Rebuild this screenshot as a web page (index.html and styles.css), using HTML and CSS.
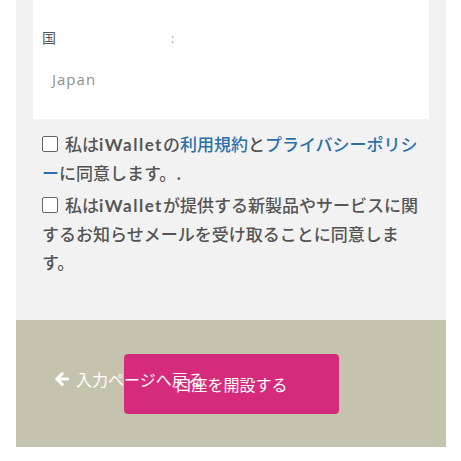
FILE: index.html
```html
<!DOCTYPE html>
<html lang="ja">
<head>
<meta charset="utf-8">
<link rel="stylesheet" href="styles.css">
</head>
<body>
<div class="panel">
  <div class="card">
    <div class="label-row"><span class="label">国</span><span class="colon">:</span></div>
    <div class="value">Japan</div>
  </div>
  <p class="agree"><span class="box"></span>私は<span class="latin">iWallet</span>の<a class="link">利用規約</a>と<a class="link">プライバシーポリシー</a>に同意します。.</p>
  <p class="agree"><span class="box"></span>私は<span class="latin">iWallet</span>が提供する新製品やサービスに関するお知らせメールを受け取ることに同意します。</p>
</div>
<div class="footer">
  <button class="submit">口座を開設する</button>
  <a class="back"><svg class="arrow" viewBox="0 0 14 14" width="14" height="14"><path d="M7.2 1.6 L1.8 7 L7.2 12.4 M2.2 7 H12.6" fill="none" stroke="#fff" stroke-width="3" stroke-linecap="round" stroke-linejoin="round"/></svg>入力ページへ戻る</a>
</div>
</body>
</html>
```
FILE: styles.css
```css
html, body {
  margin: 0;
  padding: 0;
  background: #ffffff;
}
body {
  width: 461px;
  height: 461px;
  overflow: hidden;
  font-family: "Noto Sans CJK JP", "Lato", sans-serif;
}
.panel {
  margin: 0 15px 0 16px;
  background: #f2f2f2;
  padding: 0 22px 40px 26px;
}
.card {
  background: #ffffff;
  margin: 0 -5px 11px -9px;
  padding: 26px 9px 29px 9px;
}
.label-row {
  display: flex;
  align-items: center;
  height: 22px;
  font-size: 14px;
  color: #555;
}
.label {
  width: 129px;
}
.colon {
  color: #aaa;
  font-size: 12px;
}
.value {
  padding: 20px 10px 0 10px;
  font-family: "Open Sans", sans-serif;
  font-size: 15px;
  letter-spacing: 1px;
  color: #8f8f8f;
  line-height: 22px;
}
.agree {
  margin: 0 0 4px 0;
  font-size: 17px;
  line-height: 28px;
  font-weight: 500;
  color: #555;
}
.latin {
  font-family: "Lato", sans-serif;
  font-weight: 700;
  letter-spacing: 1.5px;
}
.box {
  display: inline-block;
  box-sizing: border-box;
  width: 16px;
  height: 16px;
  border: 1.5px solid #666;
  border-radius: 2px;
  background: #fff;
  margin-right: 7px;
  vertical-align: -1px;
}
.link {
  color: #2c70a9;
}
.footer {
  margin: 0 15px 0 16px;
  height: 127px;
  background: #c5c2ad;
  display: grid;
  align-items: center;
}
.back {
  grid-area: 1 / 1;
  position: relative;
  padding-left: 39px;
  color: #fff;
  font-size: 16px;
  margin-top: -10px;
  display: flex;
  align-items: center;
}
.arrow {
  margin-right: 7px;
}
.submit {
  grid-area: 1 / 1;
  justify-self: start;
  margin-left: 108px;
  width: 215px;
  height: 60px;
  background: #d62b7c;
  border: none;
  border-radius: 4px;
  color: #fff;
  font-family: "Noto Sans CJK JP", sans-serif;
  font-size: 16px;
  padding: 0;
}
```
